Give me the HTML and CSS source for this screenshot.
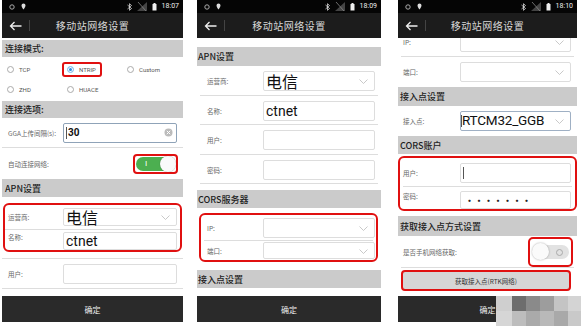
FILE: index.html
```html
<!DOCTYPE html>
<html lang="zh">
<head>
<meta charset="utf-8">
<title>移动站网络设置</title>
<link rel="stylesheet" href="styles.css">
</head>
<body>
<div class="stage">

  <!-- PHONE 1 -->
  <div class="phone p1">
    <div class="status">
      <span class="st-left">
        <svg class="ico" width="6" height="6" viewBox="0 0 6 6"><circle cx="3" cy="3" r="2.2" fill="none" stroke="#aaa" stroke-width="1"/></svg>
        <svg class="ico" width="5" height="7" viewBox="0 0 5 7"><path d="M2.5 0.5a2 2 0 0 1 2 2c0 1.5-2 4-2 4s-2-2.5-2-4a2 2 0 0 1 2-2z" fill="#ddd"/></svg>
      </span>
      <span class="st-right">
        <svg class="ico" width="5" height="8" viewBox="0 0 5 8"><path d="M0.5 2l4 3.5-2 1.8V0.7l2 1.8-4 3.5" fill="none" stroke="#ddd" stroke-width="0.8"/></svg>
        <svg class="ico" width="10" height="9" viewBox="0 0 10 9"><path d="M10 0V9H0z" fill="#444"/><path d="M1 0l8 9" stroke="#888" stroke-width="0.8"/></svg>
        <svg class="ico" width="5" height="8" viewBox="0 0 5 8"><rect x="0.5" y="1" width="4" height="6.5" fill="#eee"/><rect x="1.5" y="0" width="2" height="1" fill="#eee"/></svg>
        <span class="time">18:07</span>
      </span>
    </div>
    <div class="titlebar">
      <svg class="back" width="13" height="10" viewBox="0 0 13 10"><path d="M12.5 5H1.5M5.5 1L1.5 5l4 4" fill="none" stroke="#eee" stroke-width="1.3"/></svg>
      <span class="tsep"></span>
      <span class="title">移动站网络设置</span>
    </div>
    <div class="content">
      <div class="hdr h17 mt2">连接模式:</div>
      <div class="radios">
        <div class="radio"><span class="dot"></span>TCP</div>
        <div class="radio"><span class="mark"><span class="dot on"></span>NTRIP</span></div>
        <div class="radio"><span class="dot"></span>Custom</div>
        <div class="radio"><span class="dot"></span>ZHD</div>
        <div class="radio"><span class="dot"></span>HUACE</div>
      </div>
      <div class="hdr h17">连接选项:</div>
      <div class="row r30 line">
        <span class="lbl">GGA上传间隔(s):</span>
        <span class="inp focus"><span class="caret"></span><b class="val-b">30</b>
          <svg class="clr" width="9" height="9" viewBox="0 0 9 9"><circle cx="4.5" cy="4.5" r="4" fill="#bbb"/><path d="M2.8 2.8l3.4 3.4M6.2 2.8L2.8 6.2" stroke="#fff" stroke-width="1"/></svg>
        </span>
      </div>
      <div class="row r31">
        <span class="lbl">自动连接网络:</span>
        <span class="tgl-wrap">
          <span class="tgl on"><span class="tgl-i">I</span><span class="knob"></span></span>
        </span>
      </div>
      <div class="hdr h18">APN设置</div>
      <div class="redbox rb1">
        <div class="row r25 line">
          <span class="lbl">运营商:</span>
          <span class="inp h18i"><span class="val-l">电信</span>
            <svg class="chev" width="9" height="5" viewBox="0 0 9 5"><path d="M0.5 0.5l4 4 4-4" fill="none" stroke="#bbb" stroke-width="0.8"/></svg>
          </span>
        </div>
        <div class="row r20 top2">
          <span class="lbl">名称:</span>
          <span class="inp h18i"><span class="val-m">ctnet</span></span>
        </div>
      </div>
      <div class="row r31 lines mt6">
        <span class="lbl">用户:</span>
        <span class="inp"></span>
      </div>
    </div>
    <div class="ok">确定</div>
  </div>

  <!-- PHONE 2 -->
  <div class="phone p2">
    <div class="status">
      <span class="st-left">
        <svg class="ico" width="6" height="6" viewBox="0 0 6 6"><circle cx="3" cy="3" r="2.2" fill="none" stroke="#aaa" stroke-width="1"/></svg>
        <svg class="ico" width="5" height="7" viewBox="0 0 5 7"><path d="M2.5 0.5a2 2 0 0 1 2 2c0 1.5-2 4-2 4s-2-2.5-2-4a2 2 0 0 1 2-2z" fill="#ddd"/></svg>
      </span>
      <span class="st-right">
        <svg class="ico" width="5" height="8" viewBox="0 0 5 8"><path d="M0.5 2l4 3.5-2 1.8V0.7l2 1.8-4 3.5" fill="none" stroke="#ddd" stroke-width="0.8"/></svg>
        <svg class="ico" width="10" height="9" viewBox="0 0 10 9"><path d="M10 0V9H0z" fill="#444"/><path d="M1 0l8 9" stroke="#888" stroke-width="0.8"/></svg>
        <svg class="ico" width="5" height="8" viewBox="0 0 5 8"><rect x="0.5" y="1" width="4" height="6.5" fill="#eee"/><rect x="1.5" y="0" width="2" height="1" fill="#eee"/></svg>
        <span class="time">18:09</span>
      </span>
    </div>
    <div class="titlebar">
      <svg class="back" width="13" height="10" viewBox="0 0 13 10"><path d="M12.5 5H1.5M5.5 1L1.5 5l4 4" fill="none" stroke="#eee" stroke-width="1.3"/></svg>
      <span class="tsep"></span>
      <span class="title">移动站网络设置</span>
    </div>
    <div class="content">
      <div class="hdr h19 mt9">APN设置</div>
      <div class="row r30 sline">
        <span class="lbl">运营商:</span>
        <span class="inp"><span class="val-l">电信</span>
          <svg class="chev" width="9" height="5" viewBox="0 0 9 5"><path d="M0.5 0.5l4 4 4-4" fill="none" stroke="#bbb" stroke-width="0.8"/></svg>
        </span>
      </div>
      <div class="row r29 sline">
        <span class="lbl">名称:</span>
        <span class="inp"><span class="val-m">ctnet</span></span>
      </div>
      <div class="row r30 sline">
        <span class="lbl">用户:</span>
        <span class="inp"></span>
      </div>
      <div class="row r29 sline">
        <span class="lbl">密码:</span>
        <span class="inp"></span>
      </div>
      <div class="hdr h18 mt6">CORS服务器</div>
      <div class="redbox rb2">
        <div class="row r26 sline">
          <span class="lbl">IP:</span>
          <span class="inp"><svg class="chev" width="9" height="5" viewBox="0 0 9 5"><path d="M0.5 0.5l4 4 4-4" fill="none" stroke="#bbb" stroke-width="0.8"/></svg></span>
        </div>
        <div class="row r19">
          <span class="lbl">端口:</span>
          <span class="inp h17i"><svg class="chev" width="9" height="5" viewBox="0 0 9 5"><path d="M0.5 0.5l4 4 4-4" fill="none" stroke="#bbb" stroke-width="0.8"/></svg></span>
        </div>
      </div>
      <div class="hdr h18 mt8">接入点设置</div>
    </div>
    <div class="ok">确定</div>
  </div>

  <!-- PHONE 3 -->
  <div class="phone p3">
    <div class="status">
      <span class="st-left">
        <svg class="ico" width="6" height="6" viewBox="0 0 6 6"><circle cx="3" cy="3" r="2.2" fill="none" stroke="#aaa" stroke-width="1"/></svg>
        <svg class="ico" width="5" height="7" viewBox="0 0 5 7"><path d="M2.5 0.5a2 2 0 0 1 2 2c0 1.5-2 4-2 4s-2-2.5-2-4a2 2 0 0 1 2-2z" fill="#ddd"/></svg>
      </span>
      <span class="st-right">
        <svg class="ico" width="5" height="8" viewBox="0 0 5 8"><path d="M0.5 2l4 3.5-2 1.8V0.7l2 1.8-4 3.5" fill="none" stroke="#ddd" stroke-width="0.8"/></svg>
        <svg class="ico" width="10" height="9" viewBox="0 0 10 9"><path d="M10 0V9H0z" fill="#444"/><path d="M1 0l8 9" stroke="#888" stroke-width="0.8"/></svg>
        <svg class="ico" width="5" height="8" viewBox="0 0 5 8"><rect x="0.5" y="1" width="4" height="6.5" fill="#eee"/><rect x="1.5" y="0" width="2" height="1" fill="#eee"/></svg>
        <span class="time">18:10</span>
      </span>
    </div>
    <div class="titlebar">
      <svg class="back" width="13" height="10" viewBox="0 0 13 10"><path d="M12.5 5H1.5M5.5 1L1.5 5l4 4" fill="none" stroke="#eee" stroke-width="1.3"/></svg>
      <span class="tsep"></span>
      <span class="title">移动站网络设置</span>
    </div>
    <div class="content">
      <div class="row r31 sline under">
        <span class="lbl">IP:</span>
        <span class="inp"><svg class="chev" width="9" height="5" viewBox="0 0 9 5"><path d="M0.5 0.5l4 4 4-4" fill="none" stroke="#bbb" stroke-width="0.8"/></svg></span>
      </div>
      <div class="row r30">
        <span class="lbl">端口:</span>
        <span class="inp"><svg class="chev" width="9" height="5" viewBox="0 0 9 5"><path d="M0.5 0.5l4 4 4-4" fill="none" stroke="#bbb" stroke-width="0.8"/></svg></span>
      </div>
      <div class="hdr h19">接入点设置</div>
      <div class="row r30">
        <span class="lbl">接入点:</span>
        <span class="inp focus2"><span class="caret"></span><span class="val-m tight">RTCM32_GGB</span>
          <svg class="chev" width="9" height="5" viewBox="0 0 9 5"><path d="M0.5 0.5l4 4 4-4" fill="none" stroke="#bbb" stroke-width="0.8"/></svg>
        </span>
      </div>
      <div class="hdr h18">CORS账户</div>
      <div class="redbox rb3 mt2">
        <div class="row r29 sline">
          <span class="lbl">用户:</span>
          <span class="inp"><span class="caret"></span></span>
        </div>
        <div class="row r22 top4">
          <span class="lbl">密码:</span>
          <span class="inp h18i"><span class="dots">•••••••</span></span>
        </div>
      </div>
      <div class="hdr h20 mt5">获取接入点方式设置</div>
      <div class="row r32 sline">
        <span class="lbl wide">是否手机网络获取:</span>
        <span class="tgl-wrap off-wrap">
          <span class="tgl off"><span class="knob"></span><span class="tgl-o"></span></span>
        </span>
      </div>
      <div class="rtk-wrap">
        <div class="rtk">获取接入点(RTK网络)</div>
      </div>
    </div>
    <div class="ok">确定</div>
  </div>

  <div class="mosaic">
    <span class="m1"></span><span class="m2"></span><span class="m3"></span><span class="m4"></span><span class="m5"></span><span class="m6"></span>
    <span class="m7"></span><span class="m8"></span><span class="m9"></span><span class="m10"></span><span class="m11"></span><span class="m12"></span>
  </div>
</div>
</body>
</html>
```

FILE: styles.css
```css
* { box-sizing: border-box; }
html, body { margin: 0; padding: 0; background: #fff; }
body {
  width: 581px; height: 326px; overflow: hidden;
  font-family: "Noto Sans CJK SC", "Noto Sans", "Liberation Sans", sans-serif;
  color: #333;
}
.stage {
  position: relative;
  display: flex;
  height: 326px;
  padding-left: 2px;
}
.phone {
  display: flex;
  flex-direction: column;
  height: 326px;
  background: #fff;
  overflow: hidden;
}
.p1 { width: 181px; }
.p2 { width: 184px; margin-left: 14px; }
.p3 { width: 179px; margin-left: 17px; }

/* status bar */
.status {
  height: 13px;
  background: #050505;
  display: flex;
  align-items: center;
  justify-content: space-between;
  padding: 0 4px 0 7px;
  flex: none;
}
.st-left, .st-right { display: flex; align-items: center; gap: 6px; }
.st-right { gap: 5px; }
.ico { display: block; }
.time { font-size: 7px; color: #eee; font-family: "Roboto", "Liberation Sans", sans-serif; line-height: 1; }

/* title bar */
.titlebar {
  height: 25px;
  background: #1c1c1c;
  display: flex;
  align-items: center;
  position: relative;
  flex: none;
  padding-left: 7px;
}
.back { display: block; }
.tsep { width: 1px; height: 11px; background: #444; margin-left: 7px; }
.title {
  position: absolute; left: 0; right: 0; text-align: center;
  font-size: 10px; letter-spacing: 0.5px; color: #d8d8d8; line-height: 25px;
}

/* content */
.content {
  flex: 1;
  display: flex;
  flex-direction: column;
  overflow: hidden;
}
.hdr {
  background: #cbcbcb;
  font-size: 9px;
  font-weight: 500;
  color: #1e1e1e;
  display: flex;
  align-items: center;
  padding-left: 3px;
  flex: none;
}
.p2 .hdr { padding-left: 1px; }
.p3 .hdr { padding-left: 2px; }
.h17 { height: 17px; }
.h18 { height: 18px; }
.h19 { height: 19px; }
.h20 { height: 20px; }
.mt2 { margin-top: 2px; }
.mt5 { margin-top: 5px; }
.mt6 { margin-top: 6px; }
.mt8 { margin-top: 8px; }
.mt9 { margin-top: 9px; }

/* radios */
.radios {
  height: 44px;
  display: grid;
  grid-template-columns: 60px 60px 60px;
  grid-auto-rows: 20px;
  align-items: center;
  padding: 2px 0 0 5px;
  flex: none;
}
.radio {
  display: flex; align-items: center;
  font-size: 6px; color: #555;
  font-family: "Roboto", "Liberation Sans", sans-serif;
}
.dot {
  width: 7px; height: 7px; border-radius: 50%;
  border: 1px solid #aaa; margin-right: 5px; flex: none; background: #fff;
}
.dot.on { border: 1px solid #9cc8ee; background: #2a8fe0; box-shadow: inset 0 0 0 1px #fff; }
.mark {
  display: flex; align-items: center;
  border: 2px solid #e01010; border-radius: 3px;
  padding: 2px 4px 2px 3px; margin-left: -5px;
}

/* rows */
.row {
  display: flex;
  align-items: center;
  flex: none;
}
.p1 .row { padding-left: 6px; }
.p2 .row { padding-left: 10px; }
.p3 .row { padding-left: 5px; }
.p1 .lbl { width: 55px; }
.p2 .lbl { width: 56px; }
.p3 .lbl { width: 57px; }
.lbl { font-size: 6.5px; color: #666; flex: none; white-space: nowrap; }
.lbl.wide { width: 120px; }
.r19 { height: 19px; }
.r20 { height: 20px; }
.r22 { height: 22px; }
.r25 { height: 25px; }
.r26 { height: 26px; }
.r29 { height: 29px; }
.r30 { height: 30px; }
.r31 { height: 31px; }
.r32 { height: 32px; }
.top2 { align-items: flex-start; padding-top: 2px; }
.top4 { align-items: flex-start; padding-top: 4px; }
.line { border-bottom: 1px solid #ddd; }
.lines { border-top: 1px solid #ddd; border-bottom: 1px solid #ddd; }
.sline { position: relative; }
.sline::after {
  content: ""; position: absolute; left: 3px; right: 3px; bottom: 0;
  height: 1px; background: #ddd;
}
.under { margin-top: -12px; }

.inp {
  position: relative;
  display: flex; align-items: center;
  height: 20px;
  border: 1px solid #ddd;
  border-radius: 2px;
  background: #fff;
  padding-left: 2px;
  flex: none;
}
.p1 .inp { width: 114px; }
.p2 .inp { width: 112px; }
.p3 .inp { width: 111px; }
.h18i { height: 18px; }
.h17i { height: 17px; }
.focus { border-color: #8fa3b8; }
.focus2 { border-color: #9fb0c4; padding-left: 0; }
.caret { width: 1px; height: 12px; background: #555; flex: none; }
.val-b { font-size: 10px; color: #111; font-family: "Roboto", "Liberation Sans", sans-serif; margin-left: 1px; }
.val-l { font-size: 16px; color: #111; line-height: 1; }
.val-m { font-size: 14px; color: #111; line-height: 1; font-family: "Roboto", "Liberation Sans", sans-serif; }
.val-m.tight { font-size: 13.5px; letter-spacing: -0.2px; }
.dots { font-size: 9px; font-weight: 700; color: #222; letter-spacing: 0.5px; margin-left: 2px; }
.chev { position: absolute; right: 6px; top: 50%; margin-top: -2px; }
.clr { position: absolute; right: 3px; top: 50%; margin-top: -4.5px; }

/* toggles */
.tgl-wrap {
  margin-left: auto;
  margin-right: 5px;
  border: 2px solid #e01010;
  border-radius: 4px;
  padding: 1px;
  display: flex;
}
.tgl {
  position: relative;
  width: 39px; height: 14px; border-radius: 7px;
  display: flex; align-items: center;
}
.tgl.on { background: #4caf50; }
.tgl-i { color: #fff; font-size: 8px; margin-left: 9px; font-family: "Liberation Sans", sans-serif; }
.tgl.on .knob {
  position: absolute; right: -1px; top: -1px;
  width: 16px; height: 16px; border-radius: 50%; background: #fafafa;
  box-shadow: 0 0 1px rgba(0,0,0,0.4);
}
.off-wrap { margin-right: 4px; padding: 6px 2px 6px 3px; border-radius: 5px; }
.tgl.off { background: #e2e2e2; width: 36px; }
.tgl.off .knob {
  position: absolute; left: -1px; top: -2px;
  width: 17px; height: 17px; border-radius: 50%; background: #fafafa;
  box-shadow: 0 0 2px rgba(0,0,0,0.35);
}
.tgl-o {
  position: absolute; right: 6px; top: 3.5px;
  width: 7px; height: 7px; border-radius: 50%; border: 1px solid #aaa;
}

/* rtk button */
.rtk-wrap { padding: 2px 6px 0 3px; flex: none; }
.rtk {
  height: 21px;
  border: 2px solid #e01010;
  border-radius: 4px;
  background: #d6d6d6;
  font-size: 6.5px; color: #333;
  display: flex; align-items: center; justify-content: center;
}

/* red box */
.redbox {
  border: 2px solid #e01010;
  border-radius: 6px;
  flex: none;
  overflow: hidden;
}
.rb1 { margin: 6px 1px 0 1px; }
.rb1 .row { padding-left: 3px; }
.rb2 { margin: 5px 3px 0 2px; }
.rb2 .row { padding-left: 6px; }
.rb3 { margin-right: 0; }
.rb3 .row { padding-left: 3px; }

/* ok button */
.ok {
  height: 26px;
  margin-bottom: 4px;
  background: #2a2a2a;
  color: #eee;
  font-size: 8px;
  display: flex; align-items: center; justify-content: center;
  flex: none;
}

/* mosaic watermark */
.mosaic {
  position: absolute;
  left: 496px; top: 296px;
  display: grid;
  grid-template-columns: 16px 14px 14px 14px 14px 13px;
  grid-template-rows: 15px 15px;
}
.mosaic span { display: block; }
.m1 { background: #cfcfcf; }
.m2 { background: #6d6d6d; }
.m3 { background: #8a8a8a; }
.m4 { background: #9d9d9d; }
.m5 { background: #c4c4c4; }
.m6 { background: #d4d4d4; }
.m7 { background: #d6d6d6; }
.m8 { background: #bdbdbd; }
.m9 { background: #aaaaaa; }
.m10 { background: #b9b9b9; }
.m11 { background: #a9a9a9; }
.m12 { background: #c9c9c9; }
```
